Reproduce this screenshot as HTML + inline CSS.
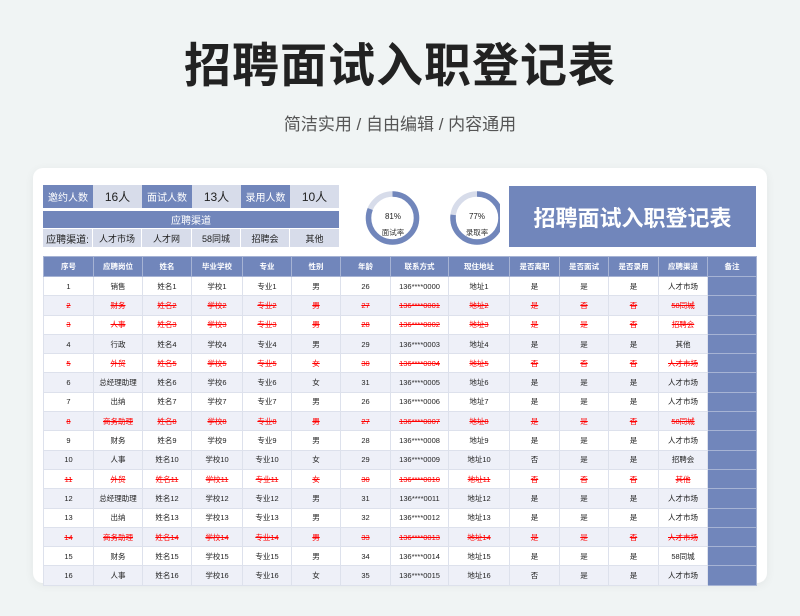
<!DOCTYPE html>
<html><head><meta charset="utf-8"><style>
*{margin:0;padding:0;box-sizing:border-box}
body{width:800px;height:616px;background:#f0f4f4;font-family:"Liberation Sans","Noto Sans CJK SC",sans-serif;position:relative;overflow:hidden}
.t1{position:absolute;left:0;width:800px;top:36px;text-align:center;font-size:47px;font-weight:bold;color:#222;letter-spacing:1px;line-height:60px}
.t2{position:absolute;left:0;width:800px;top:113px;text-align:center;font-size:17px;color:#555;line-height:24px}
.card{position:absolute;left:33px;top:168px;width:734px;height:415px;background:#fff;border-radius:10px;box-shadow:0 2px 10px rgba(0,0,0,.06)}
.c{position:absolute;display:flex;align-items:center;justify-content:center;font-size:10px;color:#222}
.b{background:#7186bb;color:#fff}
.l{background:#d7dcea}
.banner{position:absolute;left:509px;top:186px;width:247px;height:61px;background:#7186bb;color:#fff;font-size:22px;font-weight:bold;display:flex;align-items:center;justify-content:center}
table{position:absolute;left:43px;top:256px;border-collapse:collapse;table-layout:fixed;width:713px}
td,th{font-size:7.5px;text-align:center;height:19.3px;border:1px solid #dde1ec;color:#222;font-weight:normal;padding:0;white-space:nowrap;overflow:hidden}
th{background:#7186bb;color:#fff;height:20px;border:1px solid #a6b3d4;font-weight:bold}
tr:nth-child(odd) td{background:#eef0f8}
td.n{background:#7186bb!important;border:1px solid #a6b3d4}
tr.r td{color:#f00;text-decoration:line-through}
</style></head><body>
<div class="t1">招聘面试入职登记表</div>
<div class="t2">简洁实用 / 自由编辑 / 内容通用</div>
<div class="card"></div>
<div class="c b" style="left:43px;top:185px;width:50px;height:23px">邀约人数</div>
<div class="c l" style="left:93px;top:185px;width:49px;height:23px;font-size:12px">16人</div>
<div class="c b" style="left:142px;top:185px;width:50px;height:23px">面试人数</div>
<div class="c l" style="left:192px;top:185px;width:49px;height:23px;font-size:12px">13人</div>
<div class="c b" style="left:241px;top:185px;width:49px;height:23px">录用人数</div>
<div class="c l" style="left:290px;top:185px;width:49px;height:23px;font-size:12px">10人</div>
<div class="c b" style="left:43px;top:211px;width:296px;height:17px">应聘渠道</div>
<div class="c l" style="left:43px;top:229px;width:49px;height:18px">应聘渠道:</div>
<div class="c l" style="left:93px;top:229px;width:48px;height:18px;font-size:9px">人才市场</div>
<div class="c l" style="left:142px;top:229px;width:49px;height:18px;font-size:9px">人才网</div>
<div class="c l" style="left:192px;top:229px;width:48px;height:18px;font-size:9px">58同城</div>
<div class="c l" style="left:241px;top:229px;width:48px;height:18px;font-size:9px">招聘会</div>
<div class="c l" style="left:290px;top:229px;width:49px;height:18px;font-size:9px">其他</div>
<svg style="position:absolute;left:360px;top:186px" width="140" height="64">
<circle cx="32.5" cy="32" r="24" fill="none" stroke="#d7dcea" stroke-width="5.5"/>
<circle cx="32.5" cy="32" r="24" fill="none" stroke="#7186bb" stroke-width="5.5" stroke-dasharray="122.1 150.8" transform="rotate(-90 32.5 32)"/>
<circle cx="117" cy="32" r="24" fill="none" stroke="#d7dcea" stroke-width="5.5"/>
<circle cx="117" cy="32" r="24" fill="none" stroke="#7186bb" stroke-width="5.5" stroke-dasharray="116.1 150.8" transform="rotate(-90 117 32)"/>
<text x="33" y="33" font-size="8" text-anchor="middle" fill="#222" font-family="Liberation Sans">81%</text>
<text x="33" y="49" font-size="7.5" text-anchor="middle" fill="#333" font-family="Noto Sans CJK SC">面试率</text>
<text x="117" y="33" font-size="8" text-anchor="middle" fill="#222" font-family="Liberation Sans">77%</text>
<text x="117" y="49" font-size="7.5" text-anchor="middle" fill="#333" font-family="Noto Sans CJK SC">录取率</text>
</svg>
<div class="banner">招聘面试入职登记表</div>
<table>
<colgroup><col style="width:50px"><col style="width:49px"><col style="width:49px"><col style="width:51px"><col style="width:49px"><col style="width:49px"><col style="width:50px"><col style="width:58px"><col style="width:61px"><col style="width:50px"><col style="width:49px"><col style="width:50px"><col style="width:49px"><col style="width:49px"></colgroup>
<tr><th>序号</th><th>应聘岗位</th><th>姓名</th><th>毕业学校</th><th>专业</th><th>性别</th><th>年龄</th><th>联系方式</th><th>现住地址</th><th>是否离职</th><th>是否面试</th><th>是否录用</th><th>应聘渠道</th><th>备注</th></tr>
<tr><td>1</td><td>销售</td><td>姓名1</td><td>学校1</td><td>专业1</td><td>男</td><td>26</td><td>136****0000</td><td>地址1</td><td>是</td><td>是</td><td>是</td><td>人才市场</td><td class="n"></td></tr>
<tr class="r"><td>2</td><td>财务</td><td>姓名2</td><td>学校2</td><td>专业2</td><td>男</td><td>27</td><td>136****0001</td><td>地址2</td><td>是</td><td>否</td><td>否</td><td>58同城</td><td class="n"></td></tr>
<tr class="r"><td>3</td><td>人事</td><td>姓名3</td><td>学校3</td><td>专业3</td><td>男</td><td>28</td><td>136****0002</td><td>地址3</td><td>是</td><td>是</td><td>否</td><td>招聘会</td><td class="n"></td></tr>
<tr><td>4</td><td>行政</td><td>姓名4</td><td>学校4</td><td>专业4</td><td>男</td><td>29</td><td>136****0003</td><td>地址4</td><td>是</td><td>是</td><td>是</td><td>其他</td><td class="n"></td></tr>
<tr class="r"><td>5</td><td>外贸</td><td>姓名5</td><td>学校5</td><td>专业5</td><td>女</td><td>30</td><td>136****0004</td><td>地址5</td><td>否</td><td>否</td><td>否</td><td>人才市场</td><td class="n"></td></tr>
<tr><td>6</td><td>总经理助理</td><td>姓名6</td><td>学校6</td><td>专业6</td><td>女</td><td>31</td><td>136****0005</td><td>地址6</td><td>是</td><td>是</td><td>是</td><td>人才市场</td><td class="n"></td></tr>
<tr><td>7</td><td>出纳</td><td>姓名7</td><td>学校7</td><td>专业7</td><td>男</td><td>26</td><td>136****0006</td><td>地址7</td><td>是</td><td>是</td><td>是</td><td>人才市场</td><td class="n"></td></tr>
<tr class="r"><td>8</td><td>商务助理</td><td>姓名8</td><td>学校8</td><td>专业8</td><td>男</td><td>27</td><td>136****0007</td><td>地址8</td><td>是</td><td>是</td><td>否</td><td>58同城</td><td class="n"></td></tr>
<tr><td>9</td><td>财务</td><td>姓名9</td><td>学校9</td><td>专业9</td><td>男</td><td>28</td><td>136****0008</td><td>地址9</td><td>是</td><td>是</td><td>是</td><td>人才市场</td><td class="n"></td></tr>
<tr><td>10</td><td>人事</td><td>姓名10</td><td>学校10</td><td>专业10</td><td>女</td><td>29</td><td>136****0009</td><td>地址10</td><td>否</td><td>是</td><td>是</td><td>招聘会</td><td class="n"></td></tr>
<tr class="r"><td>11</td><td>外贸</td><td>姓名11</td><td>学校11</td><td>专业11</td><td>女</td><td>30</td><td>136****0010</td><td>地址11</td><td>否</td><td>否</td><td>否</td><td>其他</td><td class="n"></td></tr>
<tr><td>12</td><td>总经理助理</td><td>姓名12</td><td>学校12</td><td>专业12</td><td>男</td><td>31</td><td>136****0011</td><td>地址12</td><td>是</td><td>是</td><td>是</td><td>人才市场</td><td class="n"></td></tr>
<tr><td>13</td><td>出纳</td><td>姓名13</td><td>学校13</td><td>专业13</td><td>男</td><td>32</td><td>136****0012</td><td>地址13</td><td>是</td><td>是</td><td>是</td><td>人才市场</td><td class="n"></td></tr>
<tr class="r"><td>14</td><td>商务助理</td><td>姓名14</td><td>学校14</td><td>专业14</td><td>男</td><td>33</td><td>136****0013</td><td>地址14</td><td>是</td><td>是</td><td>否</td><td>人才市场</td><td class="n"></td></tr>
<tr><td>15</td><td>财务</td><td>姓名15</td><td>学校15</td><td>专业15</td><td>男</td><td>34</td><td>136****0014</td><td>地址15</td><td>是</td><td>是</td><td>是</td><td>58同城</td><td class="n"></td></tr>
<tr><td>16</td><td>人事</td><td>姓名16</td><td>学校16</td><td>专业16</td><td>女</td><td>35</td><td>136****0015</td><td>地址16</td><td>否</td><td>是</td><td>是</td><td>人才市场</td><td class="n"></td></tr>
</table>
</body></html>
